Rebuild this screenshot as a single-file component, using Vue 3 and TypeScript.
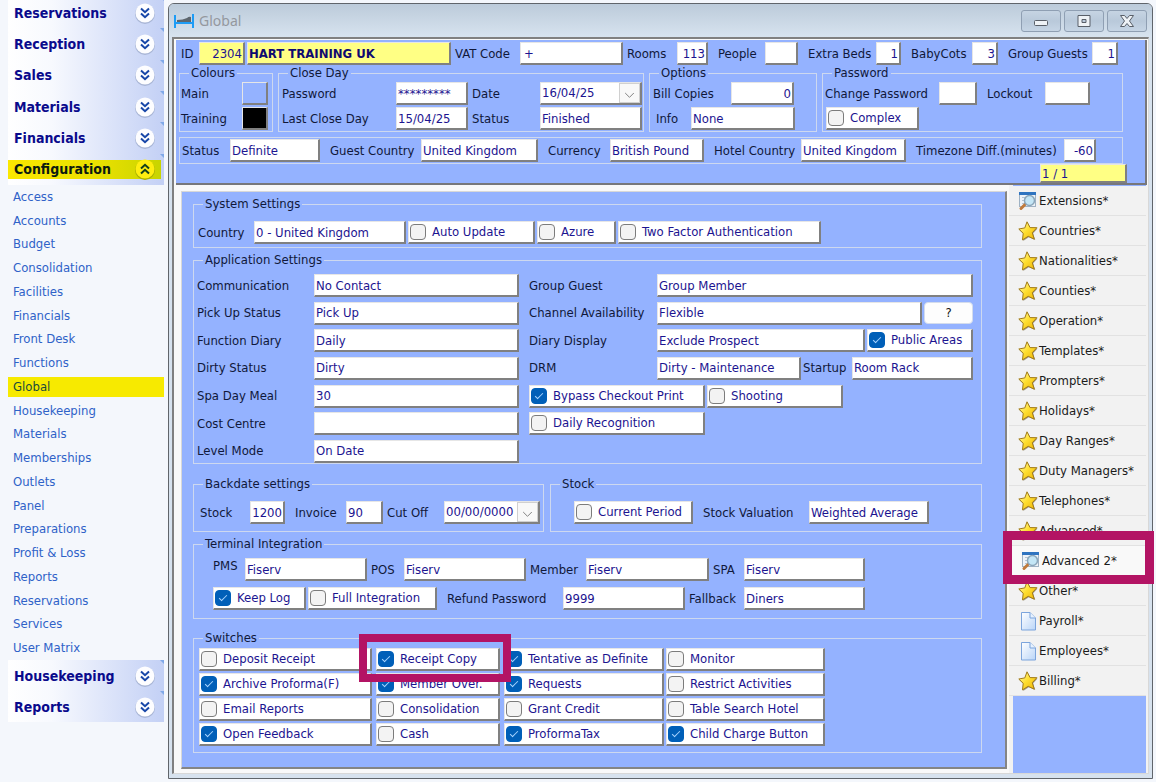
<script setup lang="ts">
import { reactive } from 'vue'

type Kind = 'label' | 'text' | 'check' | 'date' | 'swatch' | 'button'

interface Cell {
  kind: Kind
  id: string
  text: string
  cls?: string
  on?: boolean
  mark?: boolean
}

interface Row {
  cls: string
  cells: Cell[]
}

interface Section {
  name: string
  legend?: string
  rows: Row[]
}

interface Area {
  name: string
  sections: Section[]
}

const label = (text: string, id: string): Cell => ({ kind: 'label', id, text })
const field = (id: string, text = '', cls = ''): Cell => ({ kind: 'text', id, text, cls })
const date = (id: string, text: string): Cell => ({ kind: 'date', id, text })
const swatch = (id: string, cls: string): Cell => ({ kind: 'swatch', id, text: '', cls })
const check = (id: string, text: string, on = false, cls = '', mark = false): Cell => ({
  kind: 'check', id, text, on, cls, mark,
})

const areas = reactive<Area[]>([
  {
    name: 'header',
    sections: [
      {
        name: 'identity',
        rows: [{
          cls: 'r-identity',
          cells: [
            label('ID', 'hotel-id'), field('hotel-id', '2304', 'num yellow'),
            field('hotel-name', 'HART TRAINING UK', 'yellow bold g4'),
            label('VAT Code', 'vat'), field('vat', '+', 'roomy g4'),
            label('Rooms', 'rooms'), field('rooms', '113', 'num g10'),
            label('People', 'people'), field('people', '', 'num g10'),
            label('Extra Beds', 'beds'), field('beds', '1', 'num g10'),
            label('BabyCots', 'cots'), field('cots', '3', 'num g10'),
            label('Group Guests', 'guests'), field('guests', '1', 'num'),
          ],
        }],
      },
      {
        name: 'colours',
        legend: 'Colours',
        rows: [
          { cls: 'r-colours', cells: [label('Main', 'col-main'), swatch('col-main', 'blue')] },
          { cls: 'r-colours', cells: [label('Training', 'col-train'), swatch('col-train', 'black')] },
        ],
      },
      {
        name: 'closeday',
        legend: 'Close Day',
        rows: [
          {
            cls: 'r-close',
            cells: [label('Password', 'cd-pass'), field('cd-pass', '*********', 'g4'), label('Date', 'cd-date'), date('cd-date', '16/04/25')],
          },
          {
            cls: 'r-close',
            cells: [label('Last Close Day', 'cd-last'), field('cd-last', '15/04/25', 'g4'), label('Status', 'cd-status'), field('cd-status', 'Finished')],
          },
        ],
      },
      {
        name: 'options',
        legend: 'Options',
        rows: [
          { cls: 'r-bill', cells: [label('Bill Copies', 'bill'), field('bill', '0', 'num')] },
          { cls: 'r-info', cells: [label('Info', 'info'), field('info', 'None')] },
        ],
      },
      {
        name: 'password',
        legend: 'Password',
        rows: [
          { cls: 'r-pass', cells: [label('Change Password', 'chg'), field('chg', '', 'g10'), label('Lockout', 'lock'), field('lock')] },
          { cls: 'r-complex', cells: [check('complex', 'Complex')] },
        ],
      },
      {
        name: 'strip',
        rows: [{
          cls: 'r-strip',
          cells: [
            label('Status', 'status'), field('status', 'Definite', 'g10'),
            label('Guest Country', 'g-country'), field('g-country', 'United Kingdom', 'g10'),
            label('Currency', 'currency'), field('currency', 'British Pound', 'g10'),
            label('Hotel Country', 'h-country'), field('h-country', 'United Kingdom', 'g10'),
            label('Timezone Diff.(minutes)', 'tz'), field('tz', '-60', 'num'),
          ],
        }],
      },
      { name: 'record', rows: [{ cls: 'r-record', cells: [field('record', '1 / 1', 'yellow')] }] },
    ],
  },
  {
    name: 'main',
    sections: [
      {
        name: 'system',
        legend: 'System Settings',
        rows: [{
          cls: 'r-system',
          cells: [
            label('Country', 'country'), field('country', '0 - United Kingdom'),
            check('auto', 'Auto Update'), check('azure', 'Azure'), check('tfa', 'Two Factor Authentication'),
          ],
        }],
      },
      {
        name: 'application',
        legend: 'Application Settings',
        rows: [
          {
            cls: 'r-app1',
            cells: [label('Communication', 'comm'), field('comm', 'No Contact', 'g10'), label('Group Guest', 'gg'), field('gg', 'Group Member')],
          },
          {
            cls: 'r-app2',
            cells: [
              label('Pick Up Status', 'pickup'), field('pickup', 'Pick Up', 'g10'),
              label('Channel Availability', 'chan'), field('chan', 'Flexible'),
              { kind: 'button', id: 'chan-help', text: '?' },
            ],
          },
          {
            cls: 'r-app3',
            cells: [
              label('Function Diary', 'fdiary'), field('fdiary', 'Daily', 'g10'),
              label('Diary Display', 'ddisp'), field('ddisp', 'Exclude Prospect'), check('public', 'Public Areas', true),
            ],
          },
          {
            cls: 'r-app4',
            cells: [
              label('Dirty Status', 'dirty'), field('dirty', 'Dirty', 'g10'),
              label('DRM', 'drm'), field('drm', 'Dirty - Maintenance'),
              label('Startup', 'startup'), field('startup', 'Room Rack'),
            ],
          },
          {
            cls: 'r-app5',
            cells: [
              label('Spa Day Meal', 'spa-meal'), field('spa-meal', '30', 'g10'),
              check('bypass', 'Bypass Checkout Print', true), check('shooting', 'Shooting'),
            ],
          },
          { cls: 'r-app5', cells: [label('Cost Centre', 'cost'), field('cost', '', 'g10'), check('daily', 'Daily Recognition')] },
          { cls: 'r-app5', cells: [label('Level Mode', 'level'), field('level', 'On Date', 'g10')] },
        ],
      },
      {
        name: 'backdate',
        legend: 'Backdate settings',
        rows: [{
          cls: 'r-backdate',
          cells: [
            label('Stock', 'bd-stock'), field('bd-stock', '1200', 'num g10'),
            label('Invoice', 'bd-inv'), field('bd-inv', '90', 'g4'),
            label('Cut Off', 'bd-cut'), date('bd-cut', '00/00/0000'),
          ],
        }],
      },
      {
        name: 'stock',
        legend: 'Stock',
        rows: [{
          cls: 'r-stock',
          cells: [check('period', 'Current Period', false, 'g10'), label('Stock Valuation', 'val'), field('val', 'Weighted Average')],
        }],
      },
      {
        name: 'terminal',
        legend: 'Terminal Integration',
        rows: [
          {
            cls: 'r-term1',
            cells: [
              label('PMS', 'pms'), field('pms', 'Fiserv', 'g4'), label('POS', 'pos'), field('pos', 'Fiserv', 'g4'),
              label('Member', 'member'), field('member', 'Fiserv', 'g4'), label('SPA', 'spa'), field('spa', 'Fiserv'),
            ],
          },
          {
            cls: 'r-term2',
            cells: [
              check('keeplog', 'Keep Log', true), check('full', 'Full Integration', false, 'g10'),
              label('Refund Password', 'refund'), field('refund', '9999', 'g4'),
              label('Fallback', 'fallback'), field('fallback', 'Diners'),
            ],
          },
        ],
      },
      {
        name: 'switches',
        legend: 'Switches',
        rows: [
          {
            cls: 'r-switch',
            cells: [
              check('sw1', 'Deposit Receipt', false, 'g4'), check('sw2', 'Receipt Copy', true, 'g4', true),
              check('sw3', 'Tentative as Definite', true), check('sw4', 'Monitor'),
            ],
          },
          {
            cls: 'r-switch',
            cells: [
              check('sw5', 'Archive Proforma(F)', true, 'g4'), check('sw6', 'Member Over.', true, 'g4'),
              check('sw7', 'Requests', true), check('sw8', 'Restrict Activities'),
            ],
          },
          {
            cls: 'r-switch',
            cells: [
              check('sw9', 'Email Reports', false, 'g4'), check('sw10', 'Consolidation', false, 'g4'),
              check('sw11', 'Grant Credit'), check('sw12', 'Table Search Hotel'),
            ],
          },
          {
            cls: 'r-switch',
            cells: [
              check('sw13', 'Open Feedback', true, 'g4'), check('sw14', 'Cash', false, 'g4'),
              check('sw15', 'ProformaTax', true), check('sw16', 'Child Charge Button', true),
            ],
          },
        ],
      },
    ],
  },
])

const topGroups = ['Reservations', 'Reception', 'Sales', 'Materials', 'Financials', 'Configuration']
const bottomGroups = ['Housekeeping', 'Reports']
const pages = [
  'Access', 'Accounts', 'Budget', 'Consolidation', 'Facilities', 'Financials', 'Front Desk', 'Functions', 'Global',
  'Housekeeping', 'Materials', 'Memberships', 'Outlets', 'Panel', 'Preparations', 'Profit & Loss', 'Reports',
  'Reservations', 'Services', 'User Matrix',
]

type Icon = 'star' | 'find' | 'page'
const tabs: { text: string; icon: Icon; mark?: boolean }[] = [
  { text: 'Extensions*', icon: 'find' },
  { text: 'Countries*', icon: 'star' },
  { text: 'Nationalities*', icon: 'star' },
  { text: 'Counties*', icon: 'star' },
  { text: 'Operation*', icon: 'star' },
  { text: 'Templates*', icon: 'star' },
  { text: 'Prompters*', icon: 'star' },
  { text: 'Holidays*', icon: 'star' },
  { text: 'Day Ranges*', icon: 'star' },
  { text: 'Duty Managers*', icon: 'star' },
  { text: 'Telephones*', icon: 'star' },
  { text: 'Advanced*', icon: 'star' },
  { text: 'Advanced 2*', icon: 'find', mark: true },
  { text: 'Other*', icon: 'star' },
  { text: 'Payroll*', icon: 'page' },
  { text: 'Employees*', icon: 'page' },
  { text: 'Billing*', icon: 'star' },
]
</script>

<template>
  <div class="app">
    <svg class="defs" aria-hidden="true">
      <defs>
        <linearGradient id="gold" x1="0" y1="0" x2="1" y2="1">
          <stop offset="0" stop-color="#fffbc0" />
          <stop offset="0.45" stop-color="#ffe033" />
          <stop offset="1" stop-color="#eeb000" />
        </linearGradient>
        <linearGradient id="sheet" x1="0" y1="0" x2="1" y2="1">
          <stop offset="0" stop-color="#ffffff" />
          <stop offset="1" stop-color="#b9d5f8" />
        </linearGradient>
      </defs>
    </svg>

    <nav class="sidebar" aria-label="Modules">
      <div class="groups top">
        <button v-for="g in topGroups" :key="g" type="button" class="group" :class="{ open: g === 'Configuration' }">
          <span class="group-name">{{ g }}</span>
          <svg class="round" viewBox="0 0 22 22" aria-hidden="true">
            <circle class="shade" cx="11" cy="12" r="10" />
            <circle class="disc" cx="11" cy="11" r="9.5" />
            <path v-if="g === 'Configuration'" d="M7 10.5 11 6.8 15 10.5M7 15.5 11 11.8 15 15.5" />
            <path v-else d="M7 6.5 11 10.2 15 6.5M7 11.5 11 15.2 15 11.5" />
          </svg>
        </button>
      </div>
      <ul class="pages">
        <li v-for="p in pages" :key="p"><a href="#" :class="{ current: p === 'Global' }">{{ p }}</a></li>
      </ul>
      <div class="groups bottom">
        <button v-for="g in bottomGroups" :key="g" type="button" class="group">
          <span class="group-name">{{ g }}</span>
          <svg class="round" viewBox="0 0 22 22" aria-hidden="true">
            <circle class="shade" cx="11" cy="12" r="10" />
            <circle class="disc" cx="11" cy="11" r="9.5" />
            <path d="M7 6.5 11 10.2 15 6.5M7 11.5 11 15.2 15 11.5" />
          </svg>
        </button>
      </div>
    </nav>

    <main class="window">
      <header class="titlebar">
        <svg class="bed" viewBox="0 0 20 16" aria-hidden="true">
          <path d="M1 2V15M19 1V15M1 10H19" fill="none" stroke="#1e9cf5" stroke-width="2" />
          <path d="M3 9V7Q9 7 13 5Q15 3 17 4V9Z" fill="#5d666e" />
        </svg>
        <h1>Global</h1>
        <div class="winbuttons">
          <button type="button" aria-label="Minimise">
            <svg viewBox="0 0 16 14"><rect x="1.5" y="6.5" width="13" height="5" rx="1" /></svg>
          </button>
          <button type="button" aria-label="Restore">
            <svg viewBox="0 0 16 14"><path d="M2 1.500H14V12.500H2ZM6 5.500V8.500H10V5.500Z" fill-rule="evenodd" /></svg>
          </button>
          <button type="button" aria-label="Close">
            <svg viewBox="0 0 16 14"><path d="M1.500 1.500H5.500L8 4.500 10.500 1.500H14.500L10.500 7 14.500 12.500H10.500L8 9.500 5.500 12.500H1.500L5.500 7Z" /></svg>
          </button>
        </div>
      </header>

      <div class="client">
        <section v-for="area in areas" :key="area.name" class="area" :class="area.name">
          <fieldset v-for="sec in area.sections" :key="sec.name" :class="sec.name">
            <legend v-if="sec.legend">{{ sec.legend }}</legend>
            <div class="rows">
              <div v-for="(row, i) in sec.rows" :key="i" class="row" :class="row.cls">
                <template v-for="(c, j) in row.cells" :key="j">
                  <label v-if="c.kind === 'label'" class="caption" :for="c.id">{{ c.text }}</label>
                  <input
                    v-else-if="c.kind === 'text'" :id="c.id" v-model="c.text" type="text" class="field" :class="c.cls"
                    :aria-label="c.id === 'hotel-name' ? 'Hotel name' : c.id === 'record' ? 'Record' : undefined"
                  >
                  <div v-else-if="c.kind === 'date'" class="field combo">
                    <select :id="c.id"><option>{{ c.text }}</option></select>
                    <svg viewBox="0 0 22 18" aria-hidden="true"><path d="M6 9 11 14 16 9" /></svg>
                  </div>
                  <button v-else-if="c.kind === 'swatch'" :id="c.id" type="button" class="field swatch" :class="c.cls" />
                  <button v-else-if="c.kind === 'button'" type="button" class="help">{{ c.text }}</button>
                  <label v-else class="field check" :class="[c.cls, { marked: c.mark }]">
                    <input :id="c.id" v-model="c.on" type="checkbox">
                    <span>{{ c.text }}</span>
                  </label>
                </template>
              </div>
            </div>
          </fieldset>
        </section>

        <aside class="tabs">
          <button v-for="t in tabs" :key="t.text" type="button" class="tab" :class="{ marked: t.mark }">
            <svg v-if="t.icon === 'star'" viewBox="0 0 20 20" aria-hidden="true">
              <path class="star-shade" d="M9.600 1.600 12.900 7.400 19.600 7.500 15.100 12.400 17.300 19 10.900 16.200 5.200 19.900 5.900 13.200 1 8.800 7.500 7.700Z" />
              <path class="star" d="M9 .8 12.100 6.600 18.900 6.700 14.300 11.700 16.300 18.200 10.200 15.300 4.500 18.900 5.200 12.300 .8 8 6.800 6.900Z" />
            </svg>
            <svg v-else-if="t.icon === 'find'" viewBox="0 0 20 20" aria-hidden="true">
              <rect x="1.500" y="1.500" width="16" height="14" fill="#eef3f8" stroke="#9fb2c4" />
              <rect x="1" y="1" width="17" height="3" fill="#2f74c0" />
              <path d="M4 6.500H7M4 9.500H6M4 12.500H6" stroke="#b6c4d2" />
              <path d="M7.500 13 3 17.500" stroke="#c07a3c" stroke-width="3" stroke-linecap="round" />
              <circle cx="11.500" cy="9.500" r="5" fill="#c4e6f6" stroke="#8ba6ba" stroke-width="1.500" />
            </svg>
            <svg v-else viewBox="0 0 20 20" aria-hidden="true">
              <path d="M3.500 1.500H12L17.500 7V19H3.500Z" fill="url(#sheet)" stroke="#7ba4dc" />
              <path d="M12 1.500V7H17.500" fill="#e8f2fe" stroke="#7ba4dc" />
            </svg>
            <span>{{ t.text }}</span>
          </button>
        </aside>
      </div>
    </main>
  </div>
</template>

<style>
html,
body {
  margin: 0;
  background: #f4f7fc;
}
</style>

<style scoped>
.app {
  display: flex;
  gap: 4px;
  min-height: 100vh;
  overflow: hidden;
  box-sizing: border-box;
  padding: 0 3px 5px 8px;
  background: #f4f7fc;
  color: #10183a;
  font: 13px/16px "DejaVu Sans Condensed", "Noto Sans", sans-serif;
}

.app *,
.app *::before,
.app *::after {
  box-sizing: border-box;
}

button,
input,
select {
  margin: 0;
  font: inherit;
  color: inherit;
}

.defs {
  position: absolute;
  width: 0;
  height: 0;
}

/* Sidebar */
.sidebar {
  flex: none;
  width: 156px;
}

.groups {
  display: flex;
  flex-direction: column;
  background: linear-gradient(90deg, #ffffff 0%, #f7f9fe 28%, #c3d0f5 100%);
}

.groups.top {
  height: 188px;
  margin-top: -3px;
}

.groups.bottom {
  height: 62px;
}

.group {
  position: relative;
  display: flex;
  flex: 1;
  align-items: center;
  justify-content: space-between;
  border: 0;
  padding: 0 8px 0 6px;
  background: none;
  color: #0a0a8c;
  font-size: 14px;
  font-weight: bold;
  text-align: left;
}

.group::after {
  content: "";
  position: absolute;
  top: 0;
  right: 0;
  border: 2px solid transparent;
  border-top-color: #7fa8e8;
  border-right-color: #7fa8e8;
}

.group.open {
  color: #0c1a10;
}

.group.open::before {
  content: "";
  position: absolute;
  inset: 6px 3px 6px 0;
  background: linear-gradient(90deg, #fbe800, #e9e000 60%, #c8d400);
}

.group-name {
  position: relative;
}

.round {
  position: relative;
  width: 22px;
  height: 22px;
}

.round .shade {
  fill: #a9b6d6;
}

.round .disc {
  fill: #fdfdff;
}

.round path {
  fill: none;
  stroke: #1746a8;
  stroke-width: 2;
}

.open .round .shade {
  fill: #a9b000;
}

.open .round .disc {
  fill: #ffee10;
}

.open .round path {
  stroke: #14401c;
}

.pages {
  display: flex;
  flex-direction: column;
  height: 475px;
  margin: 0;
  padding: 0;
  list-style: none;
}

.pages li {
  display: flex;
  flex: 1;
  align-items: center;
}

.pages a {
  flex: 1;
  padding: 2px 5px;
  color: #2f62c8;
  text-decoration: none;
}

.pages a.current {
  background: #f7ea00;
  color: #1b4a3c;
}

/* Window */
.window {
  display: flex;
  flex: 1;
  flex-direction: column;
  min-width: 0;
  margin-top: 3px;
  border: 1px solid #60656b;
  border-radius: 6px 6px 0 0;
  padding: 0 3px 4px 3px;
  background: #d7e2ee;
}

.titlebar {
  display: flex;
  align-items: center;
  gap: 5px;
  height: 33px;
  margin: 0 -3px;
  border-radius: 5px 5px 0 0;
  padding: 0 5px;
  background: linear-gradient(#bccbda, #d7e3ef);
}

.bed {
  width: 20px;
  height: 16px;
}

h1 {
  flex: 1;
  margin: 0;
  color: #94989e;
  font: 14px/20px "Noto Sans", sans-serif;
}

.winbuttons {
  display: flex;
  gap: 3px;
}

.winbuttons button {
  display: grid;
  place-items: center;
  width: 40px;
  height: 22px;
  border: 1px solid #8f9fb3;
  border-radius: 3px;
  padding: 0;
  background: linear-gradient(#c6d4e3, #b9c9da 50%, #c6d5e5);
}

.winbuttons svg {
  width: 16px;
  height: 14px;
  fill: #eef2f6;
  stroke: #595f68;
}

.client {
  display: grid;
  flex: 1;
  grid-template-columns: minmax(0, 1fr) 141px;
  grid-template-rows: auto 1fr;
  border: 2px solid #808080;
  border-right: 1px solid #d8d8d8;
  border-bottom: 1px solid #d8d8d8;
  background: #f9f9f9;
}

fieldset {
  min-width: 0;
  margin: 0;
  border: 1px solid #cdd8ef;
  padding: 0;
}

legend {
  height: 16px;
  margin-left: 9px;
  padding: 0 2px;
}

.rows {
  display: grid;
  gap: 2px;
}

.row {
  display: grid;
  height: 23px;
  white-space: nowrap;
}

.caption {
  align-self: center;
}

.field {
  min-width: 0;
  width: auto;
  height: 23px;
  margin-right: 2px;
  border: solid;
  border-width: 1px 2px 2px 1px;
  border-color: #e6e6e6 #808080 #808080 #e6e6e6;
  border-radius: 0;
  padding: 0 1px;
  background: #ffffff;
  color: #1c1490;
  outline: 0;
}

.field.g4 {
  margin-right: 4px;
}

.field.g10 {
  margin-right: 10px;
}

.num {
  text-align: right;
}

.roomy {
  padding-left: 3px;
}

.yellow {
  background: #ffff84;
}

.bold {
  color: #0e0a70;
  font-weight: bold;
}

.combo {
  display: grid;
  grid-template-columns: 1fr 21px;
  padding: 0 0 0 1px;
}

.combo select {
  grid-area: 1 / 1 / 2 / 3;
  min-width: 0;
  appearance: none;
  border: 0;
  padding: 0;
  background: none;
  outline: 0;
}

.combo svg {
  grid-area: 1 / 2;
  width: 21px;
  height: 20px;
  border: 1px solid #d0d0d0;
  background: #f8f8f8;
  fill: none;
  stroke: #707070;
  pointer-events: none;
}

.swatch {
  padding: 0;
}

.swatch.blue {
  background: #94b2ff;
}

.swatch.black {
  background: #000000;
}

.check {
  position: relative;
  display: flex;
  align-items: center;
  gap: 6px;
}

.check input {
  flex: none;
  display: grid;
  place-items: center;
  appearance: none;
  width: 16px;
  height: 16px;
  border: 1px solid #7c7c7c;
  border-radius: 4px;
  background: #f3f3f3;
}

.check input:checked {
  border-color: #005fb8;
  background: #005fb8;
}

.check input:checked::after {
  content: "";
  width: 8px;
  height: 4px;
  margin-bottom: 2px;
  border: solid #a8d4ff;
  border-width: 0 0 1px 1px;
  transform: rotate(-45deg);
}

.help {
  height: 22px;
  margin-right: 2px;
  border: 1px solid #d4dcec;
  border-radius: 4px;
  padding: 0;
  background: #fdfdfd;
  color: #101010;
}

/* Header panel */
.header {
  display: grid;
  grid-area: 1 / 1 / 2 / 3;
  grid-template-columns: 94px 366px 168px minmax(0, 1fr);
  column-gap: 5px;
  margin: 1px 1px 0 2px;
  border-bottom: 2px solid #77777b;
  border-right: 2px solid #77777b;
  padding: 2px 22px 0 3px;
  background: #94b2ff;
}

.header .identity,
.header .record {
  grid-column: 1 / -1;
  border: 0;
}

.header .strip {
  grid-column: 1 / -1;
  margin-top: 5px;
}

.header .rows {
  padding: 1px 0;
}

.header .identity .rows,
.header .record .rows {
  padding: 0;
}

.r-identity {
  padding-left: 2px;
  grid-template-columns: 18px 48px 208px 65px 107px 50px 41px 47px 43px 68px 35px 61px 36px 84px 28px;
}

.r-colours {
  padding-left: 1px;
  grid-template-columns: 61px 28px;
}

.r-close {
  padding-left: 3px;
  grid-template-columns: 114px 76px 68px 104px;
}

.r-bill {
  padding-left: 3px;
  grid-template-columns: 78px 65px;
}

.r-info {
  padding-left: 6px;
  grid-template-columns: 35px 106px;
}

.r-pass {
  padding-left: 2px;
  grid-template-columns: 114px 48px 58px 47px;
}

.r-complex {
  padding-left: 3px;
  grid-template-columns: 95px;
}

.r-strip {
  padding-left: 2px;
  grid-template-columns: 48px 100px 91px 127px 62px 104px 87px 115px 148px 34px;
}

.r-record {
  height: 19px;
  justify-content: end;
  grid-template-columns: 87px;
}

.record .field {
  height: 19px;
  margin-right: 0;
}

.header .record {
  margin-right: -4px;
}

/* Main panel */
.main {
  display: grid;
  grid-template-columns: 351px minmax(0, 1fr);
  align-content: start;
  gap: 4px 6px;
  margin: 6px 0 4px 7px;
  border: 1px solid #d8d8d8;
  border-right: 2px solid #858585;
  border-bottom: 2px solid #858585;
  padding: 4px 23px 14px 11px;
  background: #94b2ff;
}

.main fieldset {
  grid-column: 1 / -1;
}

.main .backdate {
  grid-column: 1;
  margin-top: 8px;
}

.main .stock {
  grid-column: 2;
  margin-top: 8px;
}

.main .switches {
  margin-top: 7px;
}

.system .rows {
  padding: 9px 0 3px 4px;
}

.application .rows {
  align-content: space-between;
  gap: 0;
  height: 195px;
  padding: 6px 0 0 3px;
}

.backdate .rows {
  padding: 9px 0 7px 6px;
}

.stock .rows {
  padding: 9px 0 7px 23px;
}

.terminal .rows {
  gap: 6px;
  padding: 6px 0 8px 19px;
}

.switches .rows {
  padding: 2px 0 6px 5px;
}

.r-system {
  grid-template-columns: 56px 154px 129px 81px 205px;
}

.r-app1 {
  grid-template-columns: 117px 215px 128px 318px;
}

.r-app2 {
  grid-template-columns: 117px 215px 128px 267px 51px;
}

.r-app3 {
  grid-template-columns: 117px 215px 128px 210px 108px;
}

.r-app4 {
  grid-template-columns: 117px 215px 128px 146px 49px 123px;
}

.r-app5 {
  grid-template-columns: 117px 215px 178px 138px;
}

.r-backdate {
  grid-template-columns: 50px 45px 51px 41px 57px 98px;
}

.r-stock {
  grid-template-columns: 129px 106px 122px;
}

.r-term1 {
  grid-template-columns: 32px 126px 33px 126px 56px 127px 31px 123px;
}

.r-term1 .caption:first-child {
  align-self: start;
}

.r-term2 {
  grid-template-columns: 95px 139px 116px 126px 55px 123px;
}

.r-switch {
  grid-template-columns: 177px 128px 162px 161px;
}

.check.marked::after {
  content: "";
  position: absolute;
  z-index: 2;
  inset: -15px -13px -13px -18px;
  border: 8px solid #b31464;
  pointer-events: none;
}

/* Tab column */
.tabs {
  display: flex;
  flex-direction: column;
  margin-left: 2px;
  padding: 1px 2px 4px 0;
  background: linear-gradient(90deg, #f2f2f2 4px, #94b2ff 4px, #94b2ff calc(100% - 2px), #f2f2f2 calc(100% - 2px));
}

.tab {
  position: relative;
  display: flex;
  align-items: center;
  gap: 1px;
  height: 30px;
  border: 0;
  border-bottom: 1px solid #e2e2e2;
  padding: 0 0 0 9px;
  background: #f2f2f2;
  color: #1b1b1b;
  white-space: nowrap;
}

.tab svg {
  flex: none;
  width: 20px;
  height: 20px;
}

.tab.marked {
  padding-left: 12px;
  background: #f9f9f9;
}

.tab.marked::after {
  content: "";
  position: absolute;
  z-index: 2;
  inset: -15px -8px -9px -6px;
  border: 9px solid #b31464;
  pointer-events: none;
}

.star {
  fill: url(#gold);
  stroke: #a07a18;
}

.star-shade {
  fill: #a39c8c;
}
</style>
